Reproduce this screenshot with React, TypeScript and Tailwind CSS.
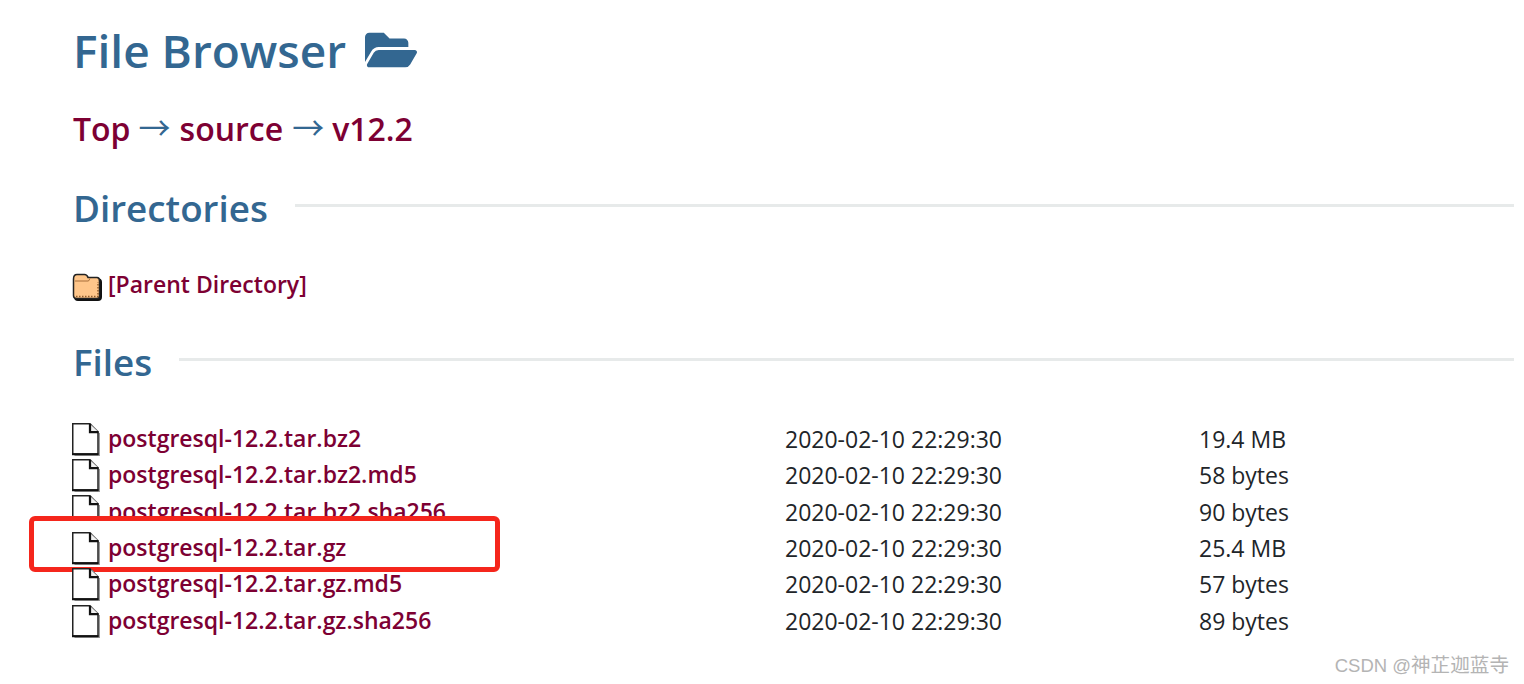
import { FaFolderOpen } from "react-icons/fa"

const FONT = "font-['Open_Sans',sans-serif]"

const files = [
  { name: "postgresql-12.2.tar.bz2", size: "19.4 MB" },
  { name: "postgresql-12.2.tar.bz2.md5", size: "58 bytes" },
  { name: "postgresql-12.2.tar.bz2.sha256", size: "90 bytes" },
  { name: "postgresql-12.2.tar.gz", size: "25.4 MB", marked: true },
  { name: "postgresql-12.2.tar.gz.md5", size: "57 bytes" },
  { name: "postgresql-12.2.tar.gz.sha256", size: "89 bytes" },
]

function FileIcon() {
  return (
    <svg width="28" height="33" viewBox="0 0 28 33" className="shrink-0">
      <path d="M2.5 32.25H27.25V10" fill="none" stroke="#9a9a9a" strokeWidth="1.5" />
      <path d="M0.75 0.75H18L26 8.75V31H0.75Z" fill="#fff" stroke="#222" strokeWidth="1.5" />
      <path d="M0 31.25H26.5" stroke="#111" strokeWidth="2" fill="none" />
      <path d="M18 1V9H26.5" fill="#f2f2f2" stroke="#111" strokeWidth="2.25" />
      <path d="M19.5 1.5L26 8" stroke="#888" strokeWidth="1" fill="none" />
    </svg>
  )
}

function ParentIcon() {
  return (
    <svg width="30" height="28" viewBox="0 0 30 28" className="shrink-0">
      <path d="M2 7Q2 2 6 2H13Q16 2 17 5H25Q30 5 30 9V24Q30 28 26 28H6Q2 28 2 24Z" fill="#111" />
      <path d="M1.5 6Q1.5 1.5 5 1.5H12.5Q15 1.5 16 4.5H25Q27.5 4.5 27.5 8V23Q27.5 25.5 25 25.5H4.5Q1.5 25.5 1.5 22.5Z" fill="#ffc68a" stroke="#222" strokeWidth="1.5" />
      <path d="M3 8H16.5L18 5.5" stroke="#a86f3a" strokeWidth="1" fill="none" />
      <path d="M4 23.5H26V9" stroke="#8f5c2c" strokeWidth="1.5" strokeDasharray="1.5 1.5" fill="none" />
    </svg>
  )
}

function Section({ title }: { title: string }) {
  return (
    <div className="flex items-center gap-[27px] pl-px">
      <h2 className="text-[36.8px] leading-[44px] font-semibold text-[#336791] whitespace-nowrap">{title}</h2>
      <div className="flex-1 h-[3px] -mt-[6px] bg-[#e7eaea]" />
    </div>
  )
}

export default function App() {
  return (
    <div className={`${FONT} relative w-[1524px] h-[684px] overflow-hidden bg-white pl-[72px] pr-[10px] pt-[21px]`}>
      <h1 className="flex items-center gap-[19px] h-[58px] pl-px text-[46px] font-semibold text-[#336791]">
        File Browser
        <FaFolderOpen size={52} />
      </h1>

      <div className="mt-[28px] flex items-center h-[44px] pl-px text-[32px] font-semibold text-[#7d0033]">
        <span>Top</span>
        <span className="ml-[8px] mr-[9px] -mt-[6px] text-[#336791] font-normal font-['Noto_Sans_CJK_SC',sans-serif]">→</span>
        <span>source</span>
        <span className="ml-[9px] mr-[8px] -mt-[6px] text-[#336791] font-normal font-['Noto_Sans_CJK_SC',sans-serif]">→</span>
        <span>v12.2</span>
      </div>

      <div className="mt-[35px]">
        <Section title="Directories" />
      </div>

      <div className="mt-[39px] flex items-center gap-[6px] h-[36px]">
        <ParentIcon />
        <a className="text-[23px] font-semibold text-[#7d0033] -mt-[6px]">[Parent Directory]</a>
      </div>

      <div className="mt-[35px]">
        <Section title="Files" />
      </div>

      <div className="mt-[36.9px] flex flex-col">
        {files.map((f) => (
          <div key={f.name} className="relative flex items-center h-[36.4px] text-[23px]">
            {f.marked && (
              <div className="absolute left-[-43px] top-[-14px] w-[471px] h-[56px] rounded-[6px] border-[5px] border-[#f5261c] bg-white" />
            )}
            <div className="relative flex items-center w-[713px] gap-[8px]">
              <FileIcon />
              <a className="font-semibold text-[#7d0033] -mt-[2px]">{f.name}</a>
            </div>
            <span className="w-[414px] text-[#212529]">2020-02-10 22:29:30</span>
            <span className="text-[#212529]">{f.size}</span>
          </div>
        ))}
      </div>

      <span className="absolute right-[15px] bottom-[4px] text-[18.5px] text-[#b4b4b4] font-['Liberation_Sans','Noto_Sans_CJK_SC',sans-serif]">
        CSDN @<span className="text-[19.6px]">神芷迦蓝寺</span>
      </span>
    </div>
  )
}
